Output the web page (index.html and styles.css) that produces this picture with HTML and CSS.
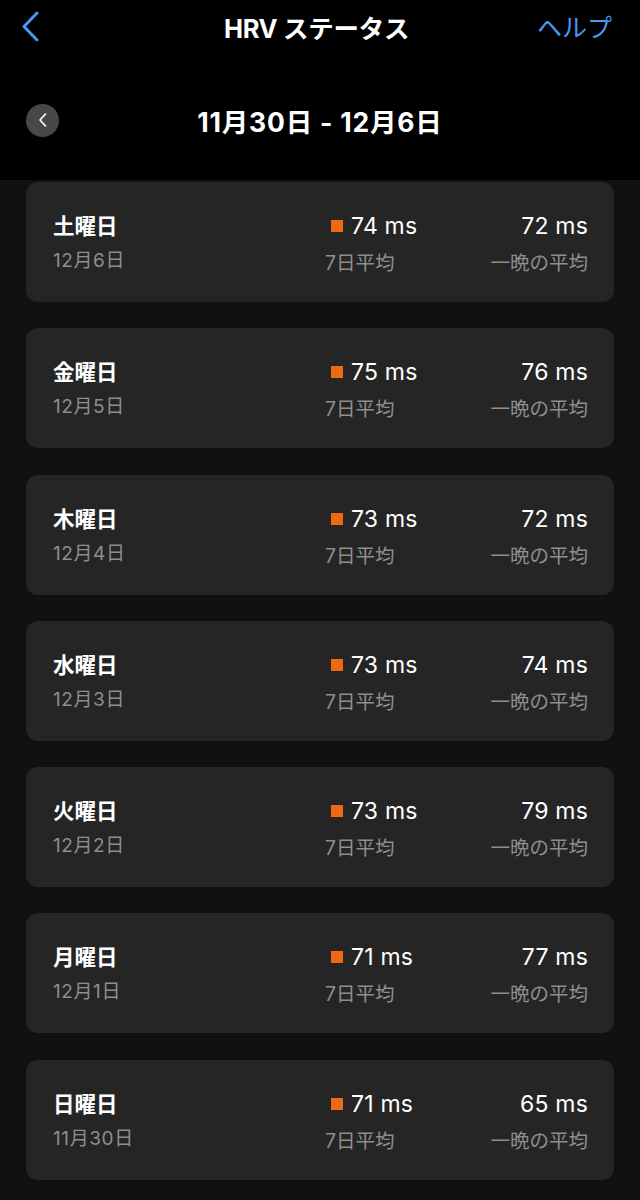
FILE: index.html
```html
<!DOCTYPE html>
<html lang="ja">

<head>
    <meta charset="UTF-8">
    <meta name="viewport" content="width=device-width, initial-scale=1.0">
    <title>HRVステータス</title>
    <link rel="stylesheet" href="styles.css">
</head>

<body>
    <header class="header">
        <div class="topBar">
            <span class="backBtn">
                <svg width="20" height="30" viewBox="0 0 20 30">
                    <polyline points="16,2 3,15.5 16,29" fill="none" stroke="#4a98ee" stroke-width="3" stroke-linecap="round" stroke-linejoin="round"/>
                </svg>
            </span>
            <h1 class="title">HRV ステータス</h1>
            <span class="helpLink">ヘルプ</span>
        </div>
        <div class="rangeBar">
            <span class="prevBtn">
                <svg width="10" height="14" viewBox="0 0 10 14">
                    <polyline points="7.5,1 2,7 7.5,13" fill="none" stroke="#fff" stroke-width="1.6" stroke-linecap="round" stroke-linejoin="round"/>
                </svg>
            </span>
            <h2 class="range">11月30日 - 12月6日</h2>
            <span></span>
        </div>
    </header>

    <main class="list">
        <div class="card">
            <div class="day">土曜日</div>
            <div class="avg"><i class="dot"></i>74 ms</div>
            <div class="night">72 ms</div>
            <div class="date">12月6日</div>
            <div class="label">7日平均</div>
            <div class="label right">一晩の平均</div>
        </div>
        <div class="card">
            <div class="day">金曜日</div>
            <div class="avg"><i class="dot"></i>75 ms</div>
            <div class="night">76 ms</div>
            <div class="date">12月5日</div>
            <div class="label">7日平均</div>
            <div class="label right">一晩の平均</div>
        </div>
        <div class="card">
            <div class="day">木曜日</div>
            <div class="avg"><i class="dot"></i>73 ms</div>
            <div class="night">72 ms</div>
            <div class="date">12月4日</div>
            <div class="label">7日平均</div>
            <div class="label right">一晩の平均</div>
        </div>
        <div class="card">
            <div class="day">水曜日</div>
            <div class="avg"><i class="dot"></i>73 ms</div>
            <div class="night">74 ms</div>
            <div class="date">12月3日</div>
            <div class="label">7日平均</div>
            <div class="label right">一晩の平均</div>
        </div>
        <div class="card">
            <div class="day">火曜日</div>
            <div class="avg"><i class="dot"></i>73 ms</div>
            <div class="night">79 ms</div>
            <div class="date">12月2日</div>
            <div class="label">7日平均</div>
            <div class="label right">一晩の平均</div>
        </div>
        <div class="card">
            <div class="day">月曜日</div>
            <div class="avg"><i class="dot"></i>71 ms</div>
            <div class="night">77 ms</div>
            <div class="date">12月1日</div>
            <div class="label">7日平均</div>
            <div class="label right">一晩の平均</div>
        </div>
        <div class="card">
            <div class="day">日曜日</div>
            <div class="avg"><i class="dot"></i>71 ms</div>
            <div class="night">65 ms</div>
            <div class="date">11月30日</div>
            <div class="label">7日平均</div>
            <div class="label right">一晩の平均</div>
        </div>
    </main>
</body>

</html>
```

FILE: styles.css
```css
* {
    margin: 0;
    box-sizing: border-box;
}

body {
    background: #111111;
    color: #fff;
    font-family: "Inter", "Noto Sans CJK JP", sans-serif;
    height: 1200px;
    overflow: hidden;
}

.header {
    background: #000;
    height: 180px;
}

.topBar {
    height: 52px;
    display: grid;
    grid-template-columns: 1fr auto 1fr;
    align-items: center;
    padding: 0 28px 0 21px;
}

.backBtn {
    display: flex;
    align-items: center;
}

.title {
    font-size: 25.5px;
    font-weight: 700;
    letter-spacing: -0.3px;
}

.helpLink {
    justify-self: end;
    color: #4a98ee;
    font-size: 25px;
}

.rangeBar {
    height: 68px;
    margin-top: 34px;
    display: grid;
    grid-template-columns: 1fr auto 1fr;
    align-items: center;
    padding: 0 26px;
}

.prevBtn {
    width: 33px;
    height: 33px;
    border-radius: 50%;
    background: #484848;
    display: flex;
    align-items: center;
    justify-content: center;
}

.range {
    font-size: 26.5px;
    font-weight: 700;
    letter-spacing: 0.8px;
}

.list {
    display: flex;
    flex-direction: column;
    gap: 26.3px;
    padding: 2px 26px 0;
}

.card {
    height: 120px;
    background: #252525;
    border-radius: 12px;
    padding: 30px 26px 0 27px;
    display: grid;
    grid-template-columns: 1fr 164px 99px;
    grid-template-rows: 28px auto;
    align-items: center;
}

.day {
    font-size: 21.5px;
    font-weight: 700;
    line-height: 28px;
}

.avg,
.night {
    font-size: 23px;
    letter-spacing: 0.2px;
    line-height: 28px;
    display: flex;
    align-items: center;
}

.night {
    justify-content: flex-end;
}

.dot {
    width: 12px;
    height: 12px;
    background: #ee6a12;
    margin: 0 8px 0 6px;
}

.date {
    color: #8e8e8e;
    font-size: 19px;
    letter-spacing: 0.6px;
    line-height: 24px;
    margin-top: 9px;
    align-self: start;
}

.label {
    color: #8e8e8e;
    font-size: 19.5px;
    line-height: 24px;
    margin-top: 11px;
    align-self: start;
}

.right {
    text-align: right;
}
```
